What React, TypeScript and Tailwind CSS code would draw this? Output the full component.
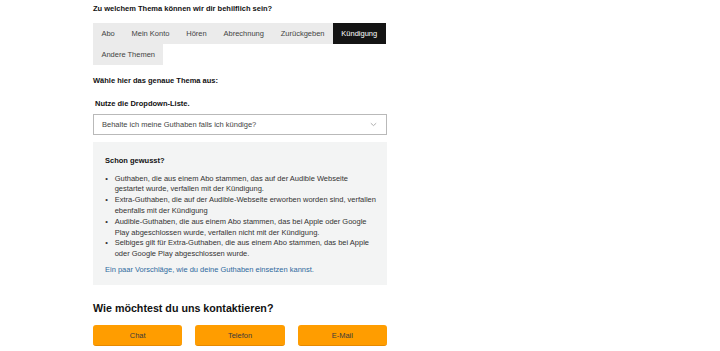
import React from "react";

const tabs = ["Abo", "Mein Konto", "Hören", "Abrechnung", "Zurückgeben", "Kündigung", "Andere Themen"];

export default function App() {
  return (
    <div className="min-h-[351px] w-[720px] bg-white font-['Liberation_Sans',Arial,sans-serif] text-[7.5px] text-[#333]">
      <div className="ml-[93px] w-[294px] pt-[4px]">
        <h2 className="text-[7.5px] font-bold leading-[9px] text-[#111]">
          Zu welchem Thema können wir dir behilflich sein?
        </h2>
        <div className="mt-[9.7px] flex flex-wrap">
          {tabs.map((t) =>
            t === "Kündigung" ? (
              <div key={t} className="flex h-[21.4px] items-center bg-[#141414] px-[8.4px] text-white">
                {t}
              </div>
            ) : (
              <div key={t} className="flex h-[21.4px] items-center bg-[#ebebeb] px-[8.4px] text-[#444]">
                {t}
              </div>
            )
          )}
        </div>
        <p className="mt-[10.8px] font-bold leading-[9px] text-[#111]">Wähle hier das genaue Thema aus:</p>
        <p className="ml-[2px] mt-[14px] font-bold leading-[9px] text-[#111]">Nutze die Dropdown-Liste.</p>
        <div className="mt-[5.5px] flex h-[21.7px] items-center justify-between border border-[#b9b9b9] bg-white pl-[8px] pr-[9px] text-[#444]">
          <span>Behalte ich meine Guthaben falls ich kündige?</span>
          <svg width="7" height="5" viewBox="0 0 7 5" fill="none">
            <path d="M0.8 1.2 L3.5 3.6 L6.2 1.2" stroke="#9a9a9a" strokeWidth="0.8" />
          </svg>
        </div>
        <div className="mt-[7px] bg-[#f3f4f4] pb-[8.6px] pl-[12px] pr-[10px] pt-[14px]">
          <p className="font-bold leading-[10.8px] text-[#111]">Schon gewusst?</p>
          <ul className="mt-[6.3px] leading-[10.8px] text-[#333]">
            {[
              ["Guthaben, die aus einem Abo stammen, das auf der Audible Webseite", "gestartet wurde, verfallen mit der Kündigung."],
              ["Extra-Guthaben, die auf der Audible-Webseite erworben worden sind, verfallen", "ebenfalls mit der Kündigung"],
              ["Audible-Guthaben, die aus einem Abo stammen, das bei Apple oder Google", "Play abgeschlossen wurde, verfallen nicht mit der Kündigung."],
              ["Selbiges gilt für Extra-Guthaben, die aus einem Abo stammen, das bei Apple", "oder Google Play abgeschlossen wurde."],
            ].map(([a, b], i) => (
              <li key={i} className="flex">
                <span className="w-[9.7px] shrink-0 pl-[0.3px]">•</span>
                <span className="whitespace-nowrap">
                  {a}
                  <br />
                  {b}
                </span>
              </li>
            ))}
          </ul>
          <p className="mt-[5.5px] leading-[10.8px] text-[#2f6a9e]">
            Ein paar Vorschläge, wie du deine Guthaben einsetzen kannst.
          </p>
        </div>
        <h2 className="mt-[17.3px] text-[10.7px] font-bold leading-[13px] text-[#111]">
          Wie möchtest du uns kontaktieren?
        </h2>
        <div className="mt-[10.2px] grid grid-cols-3 gap-[13px]">
          {["Chat", "Telefon", "E-Mail"].map((b) => (
            <div
              key={b}
              className="flex h-[20.7px] items-center justify-center rounded-[3px] border-b border-[#e68a00] bg-[#ff9d00] text-[#3b3b3b]"
            >
              {b}
            </div>
          ))}
        </div>
      </div>
    </div>
  );
}
